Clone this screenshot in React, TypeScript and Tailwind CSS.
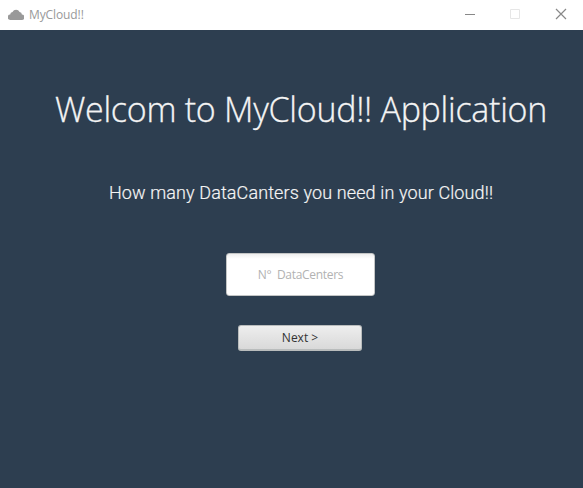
export default function App() {
  return (
    <div className="flex h-[488px] w-[583px] flex-col overflow-hidden bg-[#2d3e50]">
      <header className="flex h-[30px] items-center bg-white pl-2">
        <svg width="16" height="12" viewBox="0 0 16 12" fill="#999999">
          <path d="M2.500 11A2.700 2.700 0 0 1 2.200 5.600 2.800 2.800 0 0 1 4.500 3 4 4 0 0 1 11.600 3 2.800 2.800 0 0 1 13.900 5.600 2.700 2.700 0 0 1 13.500 11Z" />
        </svg>
        <span className="ml-[5px] font-['Open_Sans',sans-serif] text-[12px] tracking-[-0.1px] text-[#999999]">MyCloud!!</span>
        <svg className="ml-auto" width="136" height="30" fill="none" strokeWidth="1">
          <path d="M18 14.5h10" stroke="#888888" />
          <path d="M63.500 9.500h9v9h-9z" stroke="#e6e6e6" />
          <path d="M109 9l10 10M119 9l-10 10" stroke="#888888" strokeWidth="1.2" />
        </svg>
      </header>
      <main className="flex flex-1 flex-col items-center pl-[18px]">
        <h1 className="mt-[56px] whitespace-nowrap pl-px font-['Open_Sans',sans-serif] text-[34px] leading-[46px] font-light tracking-[-0.27px] text-[#f4f4f4] [-webkit-text-stroke:0.3px_#f4f4f4]">Welcom to MyCloud!! Application</h1>
        <p className="mt-[49px] whitespace-nowrap pl-px font-[Roboto,sans-serif] text-[18px] leading-[24px] font-light tracking-[0.12px] text-[#f4f4f4] [-webkit-text-stroke:0.2px_#f4f4f4]">How many DataCanters you need in your Cloud!!</p>
        <input placeholder="N°  DataCenters" className="mt-[48px] h-[43px] w-[149px] rounded-[3px] border border-[#c3c5c5] bg-linear-to-b from-[#eeeeee] to-white to-[5px] text-center font-['Open_Sans',sans-serif] text-[12px] tracking-[-0.3px] placeholder:text-[#b2b2b2]" />
        <button className="mt-[29px] mr-px h-[26px] w-[124px] rounded-[3px] border border-b-2 border-[#b9bcbc] bg-linear-to-b from-[#eeeeee] to-[#d9d9d9] font-['Open_Sans',sans-serif] text-[12px] leading-[20px] text-[#333333]">Next &gt;</button>
      </main>
    </div>
  );
}
